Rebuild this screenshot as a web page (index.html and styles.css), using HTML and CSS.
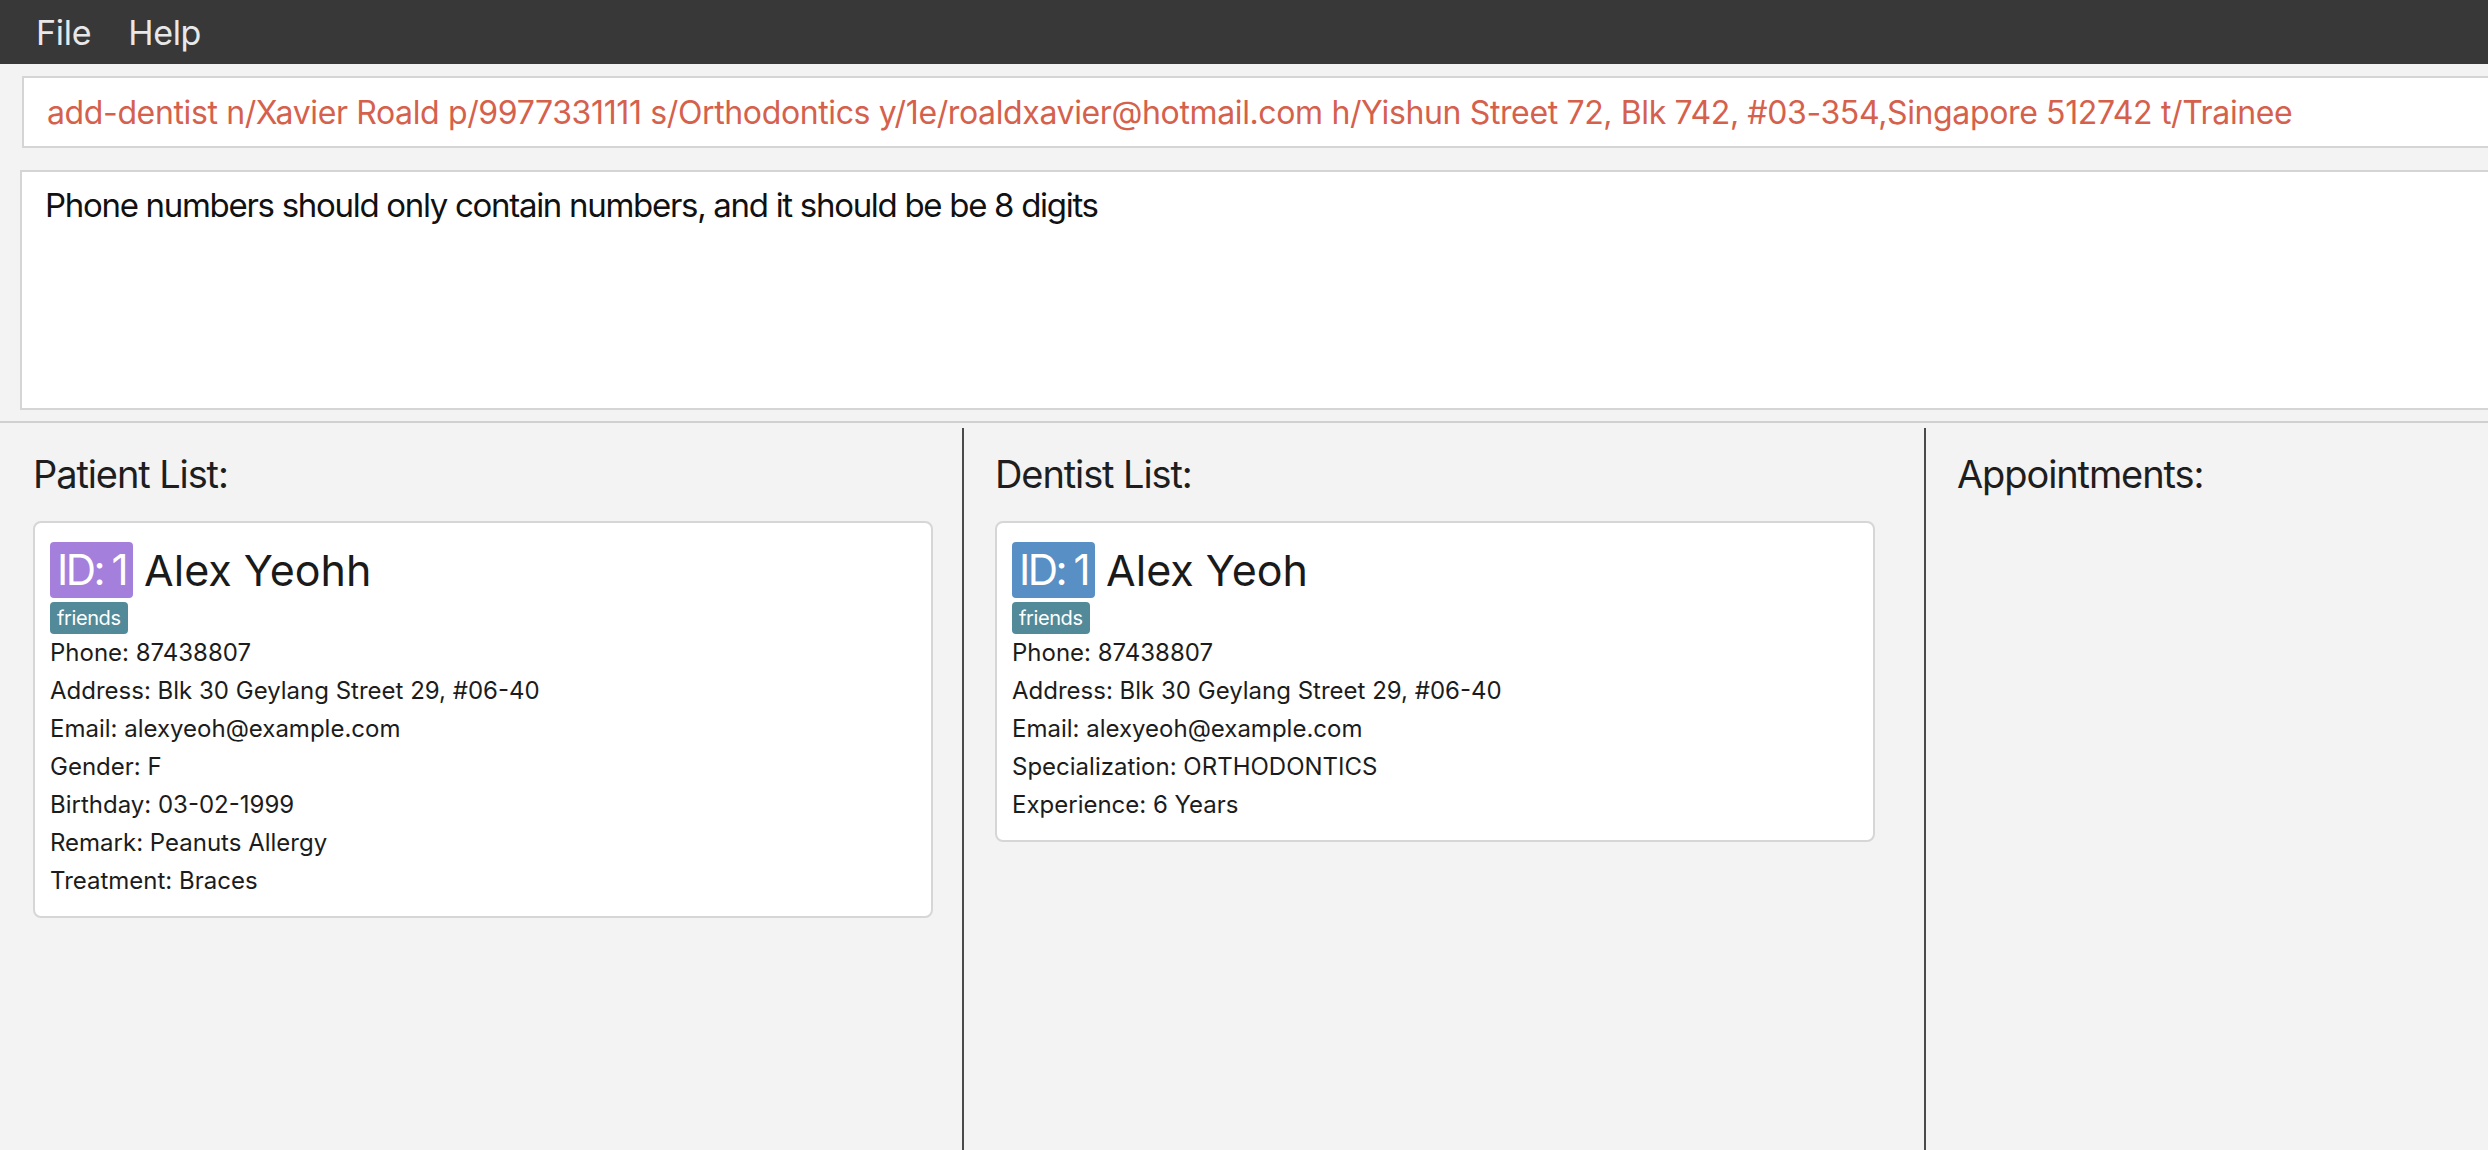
FILE: index.html
```html
<!DOCTYPE html>
<html lang="en">
<head>
<meta charset="utf-8">
<title>Dental Clinic</title>
<link rel="stylesheet" href="styles.css">
</head>
<body>
<div class="menubar">
  <span class="menu-item">File</span>
  <span class="menu-item">Help</span>
</div>
<div class="app">
  <div class="command-box">
    <span class="command-text">add-dentist n/Xavier Roald p/9977331111 s/Orthodontics y/1e/roaldxavier@hotmail.com h/Yishun Street 72, Blk 742, #03-354,Singapore 512742 t/Trainee</span>
  </div>
  <div class="result-box">Phone numbers should only contain numbers, and it should be be 8 digits</div>
  <div class="panels">
    <section class="panel panel-patients">
      <h2 class="panel-title">Patient List:</h2>
      <div class="card">
        <div class="card-head">
          <span class="id-badge id-patient">ID: 1</span>
          <span class="card-name">Alex Yeohh</span>
        </div>
        <div class="tags"><span class="tag">friends</span></div>
        <div class="field">Phone: 87438807</div>
        <div class="field">Address: Blk 30 Geylang Street 29, #06-40</div>
        <div class="field">Email: alexyeoh@example.com</div>
        <div class="field">Gender: F</div>
        <div class="field">Birthday: 03-02-1999</div>
        <div class="field">Remark: Peanuts Allergy</div>
        <div class="field">Treatment: Braces</div>
      </div>
    </section>
    <section class="panel panel-dentists">
      <h2 class="panel-title">Dentist List:</h2>
      <div class="card">
        <div class="card-head">
          <span class="id-badge id-dentist">ID: 1</span>
          <span class="card-name">Alex Yeoh</span>
        </div>
        <div class="tags"><span class="tag">friends</span></div>
        <div class="field">Phone: 87438807</div>
        <div class="field">Address: Blk 30 Geylang Street 29, #06-40</div>
        <div class="field">Email: alexyeoh@example.com</div>
        <div class="field">Specialization: ORTHODONTICS</div>
        <div class="field">Experience: 6 Years</div>
      </div>
    </section>
    <section class="panel panel-appointments">
      <h2 class="panel-title">Appointments:</h2>
    </section>
  </div>
</div>
</body>
</html>
```

FILE: styles.css
```css
html, body {
  margin: 0;
  padding: 0;
  height: 100%;
}

body {
  background: #f3f3f3;
  font-family: Inter, "Liberation Sans", sans-serif;
  color: #1c1c1c;
  overflow: hidden;
}

.menubar {
  height: 64px;
  background: #383838;
  display: flex;
  align-items: center;
  gap: 37px;
  padding-left: 36px;
}

.menu-item {
  color: #e8e8e8;
  font-size: 34px;
  letter-spacing: -0.3px;
}

.app {
  width: 2890px;
}

.command-box {
  margin: 12px 22px 0 22px;
  height: 72px;
  box-sizing: border-box;
  border: 2px solid #d5d5d5;
  background: #ffffff;
  display: flex;
  align-items: center;
  padding-left: 23px;
}

.command-text {
  color: #d5614d;
  font-size: 32px;
  letter-spacing: -0.37px;
  white-space: nowrap;
}

.result-box {
  margin: 22px 20px 0 20px;
  height: 240px;
  box-sizing: border-box;
  border: 2px solid #d5d5d5;
  background: #ffffff;
  padding: 13px 23px;
  font-size: 33px;
  letter-spacing: -1.3px;
  color: #111111;
}

.panels {
  margin-top: 11px;
  border-top: 2px solid #d0d0d0;
  display: grid;
  grid-template-columns: 962px 962px 962px;
  height: 740px;
}

.panel {
  padding-top: 28px;
  box-sizing: border-box;
}

.panel-patients {
  padding-left: 33px;
  padding-right: 29px;
}

.panel-dentists,
.panel-appointments {
  margin-top: 5px;
  padding-top: 23px;
  border-left: 2px solid #4a4a4a;
  padding-left: 31px;
  padding-right: 49px;
}

.panel-title {
  margin: 0 0 24px 0;
  font-size: 38px;
  font-weight: 400;
  line-height: 46px;
  letter-spacing: -1.1px;
  color: #1e1e1e;
}

.card {
  background: #ffffff;
  border: 2px solid #d6d6d6;
  border-radius: 8px;
  padding: 19px 16px 16px 15px;
}

.card-head {
  display: flex;
  align-items: center;
  gap: 11px;
}

.id-badge {
  color: #ffffff;
  font-size: 42px;
  line-height: 56px;
  height: 56px;
  padding: 0 7px;
  border-radius: 4px;
  letter-spacing: -2.5px;
  word-spacing: -1px;
}

.id-patient {
  background: #a47fdb;
}

.id-dentist {
  background: #588fc4;
}

.card-name {
  font-size: 43px;
  line-height: 56px;
  color: #1a1a1a;
}

.tags {
  margin-top: 4px;
  display: flex;
}

.tag {
  background: #528a99;
  color: #ffffff;
  font-size: 20px;
  letter-spacing: -0.4px;
  line-height: 32px;
  height: 32px;
  padding: 0 7px;
  border-radius: 4px;
}

.field {
  font-size: 24px;
  line-height: 38px;
  color: #1c1c1c;
}
```
